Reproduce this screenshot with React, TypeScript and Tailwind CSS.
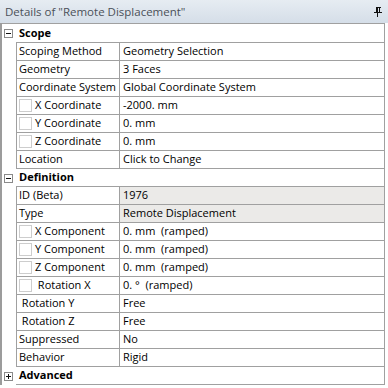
import React from "react";

type Row =
  | { kind: "section"; label: string; open: boolean }
  | { kind: "prop"; name: string; value: string; check?: boolean; gray?: boolean };

const rows: Row[] = [
  { kind: "section", label: "Scope", open: true },
  { kind: "prop", name: "Scoping Method", value: "Geometry Selection" },
  { kind: "prop", name: "Geometry", value: "3 Faces" },
  { kind: "prop", name: "Coordinate System", value: "Global Coordinate System" },
  { kind: "prop", name: "X Coordinate", value: "-2000. mm", check: true },
  { kind: "prop", name: "Y Coordinate", value: "0. mm", check: true },
  { kind: "prop", name: "Z Coordinate", value: "0. mm", check: true },
  { kind: "prop", name: "Location", value: "Click to Change" },
  { kind: "section", label: "Definition", open: true },
  { kind: "prop", name: "ID (Beta)", value: "1976", gray: true },
  { kind: "prop", name: "Type", value: "Remote Displacement", gray: true },
  { kind: "prop", name: "X Component", value: "0. mm  (ramped)", check: true },
  { kind: "prop", name: "Y Component", value: "0. mm  (ramped)", check: true },
  { kind: "prop", name: "Z Component", value: "0. mm  (ramped)", check: true },
  { kind: "prop", name: " Rotation X", value: "0. °  (ramped)", check: true },
  { kind: "prop", name: " Rotation Y", value: "Free" },
  { kind: "prop", name: " Rotation Z", value: "Free" },
  { kind: "prop", name: "Suppressed", value: "No" },
  { kind: "prop", name: "Behavior", value: "Rigid" },
  { kind: "section", label: "Advanced", open: false },
];

function Pin() {
  return (
    <svg width="8" height="10" viewBox="0 0 8 10" shapeRendering="crispEdges" fill="#111">
      <rect x="2" y="0" width="5" height="1" />
      <rect x="2" y="1" width="2" height="5" />
      <rect x="5" y="1" width="1" height="5" />
      <rect x="0" y="5" width="8" height="1" />
      <rect x="3" y="6" width="1" height="4" />
    </svg>
  );
}

function ToggleBox({ open }: { open: boolean }) {
  return (
    <div className="relative w-[9px] h-[9px] border border-[#8a8a8a] bg-white">
      <div className="absolute left-[1px] top-[3px] w-[5px] h-px bg-[#111]" />
      {!open && <div className="absolute left-[3px] top-[1px] w-px h-[5px] bg-[#111]" />}
    </div>
  );
}

export default function App() {
  return (
    <div className="w-[388px] h-[388px] bg-white overflow-hidden font-['Open_Sans',sans-serif] text-[11px] text-black">
      <div className="h-[23px] flex items-center justify-between pl-[5px] pr-[6px] bg-gradient-to-b from-[#e6ecf2] to-[#d5dee8] text-[11.5px] text-[#4b5058] leading-none">
        <span>Details of "Remote Displacement"</span>
        <Pin />
      </div>
      <div className="w-[385px] border-l-2 border-[#9c9c9c]">
        <div className="h-px bg-[#a0a0a0]" />
        {rows.map((r, i) =>
          r.kind === "section" ? (
            <div key={i} className={`flex ${i === 0 ? "h-[19px]" : "h-[18px]"}`}>
              <div className="w-[14px] flex items-center justify-center pr-[1px]">
                <ToggleBox open={r.open} />
              </div>
              <div className="flex-1 flex items-center pl-[3px] border-b border-r border-[#a0a0a0] font-bold">
                {r.label}
              </div>
            </div>
          ) : (
            <div key={i} className="flex h-[18px]">
              <div className="w-[14px]" />
              <div className="w-[103px] flex items-center pl-[2px] border-l border-b border-[#a0a0a0] whitespace-pre">
                {r.check && <div className="w-[13px] h-[13px] border border-[#cdcdcd] bg-white mr-[3px] shrink-0" />}
                <span>{r.name}</span>
              </div>
              <div
                className={`flex-1 flex items-center pl-[3px] border-l border-r border-b border-[#a0a0a0] whitespace-pre ${
                  r.gray ? "bg-[#ebeae8]" : "bg-white"
                }`}
              >
                {r.value}
              </div>
            </div>
          )
        )}
      </div>
    </div>
  );
}
